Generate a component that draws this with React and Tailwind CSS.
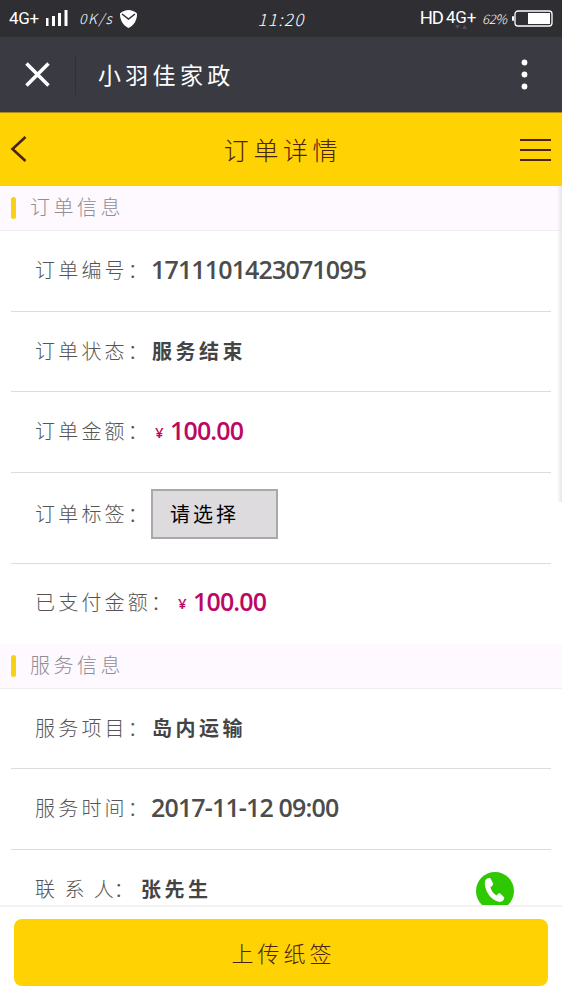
import React from "react";

const orderRows = [
  { label: "订单编号：", value: "1711101423071095", type: "number", height: "h-[81px]" },
  { label: "订单状态：", value: "服务结束", type: "text", height: "h-[80px]" },
  { label: "订单金额：", value: "100.00", type: "price", height: "h-[81px]" },
  { label: "订单标签：", value: "请选择", type: "select", height: "h-[91px]", pad: "pb-[8px]" },
  { label: "已支付金额：", value: "100.00", type: "price", height: "h-[80px]", pad: "pb-[4px]", last: true },
];

const serviceRows = [
  { label: "服务项目：", value: "岛内运输", type: "text", height: "h-[80px]" },
  { label: "服务时间：", value: "2017-11-12 09:00", type: "number", height: "h-[81px]" },
];

function StatusBar() {
  return (
    <div className="h-[37px] shrink-0 bg-[#2f2e33] text-white grid grid-cols-[1fr_auto_1fr] items-center pl-[9px] pr-[9px]">
      <div className="flex items-center">
        <span className="w-[31px] text-[17px] leading-none tracking-[-0.3px] font-[Roboto]">4G+</span>
        <svg className="ml-[6px]" width="22" height="17" viewBox="0 0 22 17" fill="currentColor">
          <rect x="0" y="8" width="2.5" height="8" />
          <rect x="6" y="6" width="3" height="10" />
          <rect x="12" y="3" width="3" height="13" />
          <rect x="18.5" y="0" width="3" height="16" />
        </svg>
        <span className="ml-[11px] w-[36px] whitespace-nowrap text-[14px] italic font-light tracking-[1.6px]">0K/s</span>
        <svg className="ml-[4px]" width="19" height="20" viewBox="0 0 19 20">
          <path d="M9.5 1C12 1 16 2.500 18 4.500C18.300 11.500 14.500 16.500 9.500 19C4.500 16.500.7 11.500 1 4.500C3 2.500 7 1 9.500 1Z" fill="white" />
          <path d="M3 5 9.500 10 16 5" fill="none" stroke="#2f2e33" strokeWidth="1.500" />
        </svg>
      </div>
      <span className="text-[17px] italic font-light tracking-[1.3px]">11:20</span>
      <div className="flex items-center justify-end">
        <span className="text-[18.5px] leading-none tracking-[-1px] font-[Roboto]">HD</span>
        <div className="ml-[3px] w-[32px] flex flex-col">
          <span className="text-[17px] leading-[16px] tracking-[-0.2px] font-[Roboto]">4G+</span>
          <svg className="ml-[9px]" width="12" height="4" viewBox="0 0 12 4" fill="#515055">
            <path d="M0 0H5L2.500 4ZM7 4H12L9.500 0Z" />
          </svg>
        </div>
        <span className="ml-[4px] w-[26px] whitespace-nowrap text-[13px] italic font-light tracking-[-0.3px]">62%</span>
        <svg className="ml-[4px]" width="41" height="17" viewBox="0 0 41 17">
          <rect x="0" y="6" width="2" height="5" rx="1" fill="white" />
          <rect x="3" y="1" width="37" height="15" rx="3" fill="none" stroke="white" strokeWidth="1.300" />
          <rect x="16" y="3" width="22" height="11" fill="white" />
        </svg>
      </div>
    </div>
  );
}

function TitleBar() {
  return (
    <div className="h-[75px] shrink-0 bg-[#393a42] text-white flex items-center pl-[25px] pr-[34px]">
      <svg width="25" height="25" viewBox="0 0 25 25" stroke="currentColor" strokeWidth="3.600">
        <path d="M1.500 1.500 23.500 23.500M23.500 1.500 1.500 23.500" />
      </svg>
      <div className="ml-[25px] w-px h-[40px] bg-[#303138]" />
      <h1 className="ml-[22px] text-[23px] font-normal tracking-[4.300px]">小羽佳家政</h1>
      <svg className="ml-auto" width="7" height="31" viewBox="0 0 7 31" fill="currentColor">
        <circle cx="3.500" cy="3.500" r="2.900" />
        <circle cx="3.500" cy="15.500" r="2.900" />
        <circle cx="3.500" cy="27.500" r="2.900" />
      </svg>
    </div>
  );
}

function PageHeader() {
  return (
    <div className="h-[74px] shrink-0 bg-[#ffd203] border-t border-[#a88d1c] text-[#4a2412] flex items-center justify-between pl-[10px] pr-[11px]">
      <svg className="w-[31px] -mt-[2px]" height="28" viewBox="0 0 31 28" fill="none" stroke="currentColor" strokeWidth="2.600">
        <path d="M15.500 2 2.500 14 15.500 26" />
      </svg>
      <h2 className="ml-[5px] text-[25px] font-light tracking-[4.600px]">订单详情</h2>
      <svg width="31" height="24" viewBox="0 0 31 24" stroke="currentColor" strokeWidth="2.200">
        <path d="M0 2H31M0 12H31M0 22H31" />
      </svg>
    </div>
  );
}

function SectionTitle({ children }) {
  return (
    <div className="h-[45px] shrink-0 bg-[#fdf9ff] border-b border-[#efedf0] flex items-center pl-[11px]">
      <span className="w-[5px] h-[22px] rounded-full bg-[#f8d015]" />
      <h3 className="ml-[14px] pb-[2px] text-[20px] font-light tracking-[3.500px] text-[#918c95]">{children}</h3>
    </div>
  );
}

function Value({ type, value }) {
  if (type === "number") {
    return <span className="pb-px text-[25px] font-semibold tracking-[-0.850px] text-[#4c4c4c] font-['Open_Sans']">{value}</span>;
  }
  if (type === "price") {
    return (
      <span className="flex items-center text-[#bd0764]">
        <span className="ml-[4px] w-[15px] pt-[3px] text-[15px] font-semibold font-['Open_Sans']">¥</span>
        <span className="text-[25px] font-semibold tracking-[-0.850px] font-['Open_Sans']">{value}</span>
      </span>
    );
  }
  if (type === "select") {
    return (
      <button className="w-[127px] h-[50px] border-2 border-[#aaa8aa] bg-[#dedbdf] pl-[17px] text-left text-[20px] font-normal tracking-[3px] text-black">
        {value}
      </button>
    );
  }
  return <span className="pl-px text-[20px] font-bold tracking-[3.500px] text-[#444]">{value}</span>;
}

function Row({ label, value, type, height, pad = "pb-[2px]", last }) {
  return (
    <div className={`${height} ${pad} shrink-0 mx-[11px] pl-[24px] flex items-center ${last ? "" : "border-b border-[#dcdcdc]"}`}>
      <span className={`${last ? "w-[139px]" : "w-[116px]"} whitespace-nowrap text-[20px] font-light tracking-[3.200px] text-[#555]`}>
        {label}
      </span>
      <Value type={type} value={value} />
    </div>
  );
}

function ContactRow() {
  return (
    <div className="h-[55px] shrink-0 mx-[11px] pl-[24px] pr-[37px] flex items-start overflow-hidden">
      <div className="h-[77px] flex items-center">
        <span className="w-[106px] whitespace-nowrap text-[20px] font-light text-[#555] [word-spacing:5px]">联 系 人：</span>
        <span className="text-[20px] font-bold tracking-[3.500px] text-[#444]">张先生</span>
      </div>
      <svg className="ml-auto mt-[22px]" width="38" height="38" viewBox="0 0 38 38">
        <circle cx="19" cy="19" r="19" fill="#2dc800" />
        <path
          d="M9 9C10 6.500 12 5.500 14.200 6L17.200 11.500C17.300 13.200 16 14.300 14.400 15C15 18.600 17.600 21.600 20.700 23.500C21.800 21.800 23 21 24.300 21.500L28.300 25.600C28.300 28.600 25.500 30.300 22.800 29.800C14.500 28 7.500 17.500 9 9Z"
          fill="white"
        />
      </svg>
    </div>
  );
}

function App() {
  return (
    <div className="relative w-full h-[1000px] overflow-hidden bg-white flex flex-col font-['Noto_Sans_CJK_SC',sans-serif]">
      <StatusBar />
      <TitleBar />
      <PageHeader />

      <SectionTitle>订单信息</SectionTitle>
      {orderRows.map((row) => (
        <Row key={row.label} {...row} />
      ))}

      <SectionTitle>服务信息</SectionTitle>
      {serviceRows.map((row) => (
        <Row key={row.label} {...row} />
      ))}
      <ContactRow />

      {/* Bottom action */}
      <div className="h-[95px] shrink-0 bg-white border-t-2 border-[#f3f3f3] px-[14px] pt-[12px]">
        <button className="w-full h-[67px] rounded-[8px] bg-[#ffd203] pl-[5px] text-[22px] font-light tracking-[4px] text-[#4a2412]">
          上传纸签
        </button>
      </div>

      {/* Scroll edge shadow */}
      <div className="absolute right-0 top-[186px] w-[5px] h-[316px] bg-linear-to-r from-transparent to-[#e9e4ec]" />
    </div>
  );
}

export default App;
